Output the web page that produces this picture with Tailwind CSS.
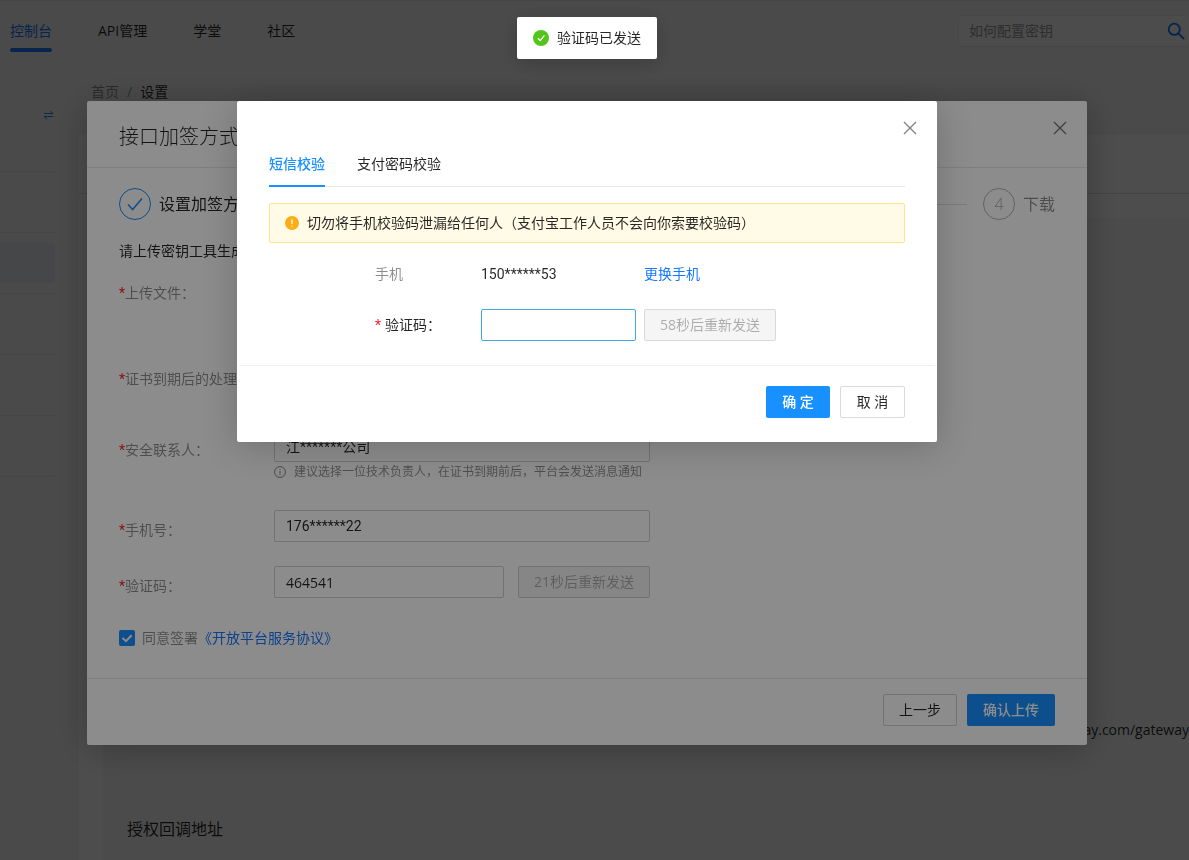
<!DOCTYPE html>
<html lang="zh-CN">
<head>
<meta charset="utf-8">
<meta name="viewport" content="width=device-width, initial-scale=1">
<title>设置</title>
<script src="https://cdn.jsdelivr.net/npm/@tailwindcss/browser@4"></script>
</head>
<body class="h-screen overflow-hidden bg-[#f5f5f5] font-['Open_Sans','Noto_Sans_CJK_SC',sans-serif] text-sm leading-[22px] font-normal text-black/85">

<!-- Page -->
<div class="flex h-screen flex-col overflow-hidden border-t border-[#e0e0e0]">
  <header class="flex shrink-0 items-start justify-between pl-[10px]">
    <nav class="flex gap-[46px] pt-[19px]">
      <a href="#" class="flex flex-col gap-[6px] text-[#1677ff]">控制台<span class="h-1 rounded-sm bg-[#1677ff]"></span></a>
      <a href="#">API管理</a>
      <a href="#">学堂</a>
      <a href="#">社区</a>
    </nav>
    <form class="mt-[14px] flex h-8 w-[231px] items-center justify-between rounded border border-r-0 border-[#eaeaea] bg-[#fafafa] pr-1 pl-[10px]">
      <input type="text" aria-label="搜索" placeholder="如何配置密钥" class="w-40 bg-transparent outline-none placeholder:text-[#999]">
      <button type="button" aria-label="搜索"><svg class="size-[18px]" viewBox="0 0 18 18" fill="none" stroke="#1677ff" stroke-width="1.8"><circle cx="7.3" cy="7.3" r="5.6"/><path d="M11.3 11.3L17 17"/></svg></button>
    </form>
  </header>
  <div class="mt-7 flex flex-1 items-stretch">
    <aside class="flex w-[55px] shrink-0 flex-col items-stretch">
      <button type="button" aria-label="切换" class="mt-[30px] mr-px self-end"><svg class="h-[10px] w-[11px]" viewBox="0 0 11 10" fill="none" stroke="#1890ff" stroke-width="1"><path d="M1 3.5H10L7.2 1M10 6.5H1L3.8 9"/></svg></button>
      <div class="mt-[51px] h-[61px] border-t border-[#e8e8e8]"></div>
      <div class="h-[61px] border-t border-[#e8e8e8] pt-[10px]"><div class="h-10 rounded-r bg-[#e6ecf2]"></div></div>
      <div class="h-[61px] border-t border-[#e8e8e8]"></div>
      <div class="h-[61px] border-t border-[#e8e8e8]"></div>
      <div class="h-[61px] border-t border-[#e8e8e8]"></div>
      <div class="border-t border-[#e8e8e8]"></div>
    </aside>
    <main class="ml-6 flex flex-1 flex-col">
      <nav class="flex gap-2 pt-px pl-3"><a href="#" class="text-black/45">首页</a><span class="text-black/45">/</span><span>设置</span></nav>
      <section class="mt-8 flex flex-1 flex-col bg-white">
        <div class="h-[58px]"></div>
        <div class="flex-1 border-t border-[#e0e0e0] pt-6 pl-6">
          <div class="h-full bg-[#f7f7f7] pt-[501px] pl-6">
            <p class="flex justify-end whitespace-nowrap">openapi.alipay.com/gateway</p>
            <h2 class="mt-[76px] text-base leading-6">授权回调地址</h2>
          </div>
        </div>
      </section>
    </main>
  </div>
</div>

<!-- Signing method dialog -->
<div class="fixed inset-0 flex items-start justify-center bg-black/45 pt-[101px] pr-[15px]">
  <div role="dialog" aria-label="接口加签方式" class="w-full max-w-[1000px] rounded-xs bg-white shadow-[0_4px_36px_rgba(0,0,0,0.25)]">
    <div class="flex items-center justify-between border-b border-[#e8e8e8] pr-5 pl-8">
      <h1 class="pt-[22px] pb-4 text-xl leading-7 font-light">接口加签方式</h1>
      <button type="button" aria-label="关闭" class="mb-3"><svg class="size-[14px]" viewBox="0 0 14 14" fill="none" stroke="#000" stroke-opacity=".55" stroke-width="1.3"><path d="M1 1L13 13M13 1L1 13"/></svg></button>
    </div>
    <div class="px-8 pt-5 pb-6">
      <ol class="flex items-center text-base leading-8">
        <li class="flex flex-1 items-center gap-2">
          <span class="flex size-8 items-center justify-center rounded-full border border-[#1890ff]"><svg class="size-4" viewBox="0 0 16 16" fill="none" stroke="#1890ff" stroke-width="1.5"><path d="M1 8.5L5.6 13.5L15 2.5"/></svg></span>
          <span>设置加签方式</span>
          <span class="mr-4 ml-2 h-px flex-1 bg-[#e0e0e0]"></span>
        </li>
        <li class="flex items-center gap-2 text-black/45">
          <span class="flex size-8 items-center justify-center rounded-full border border-black/30 font-light text-black/35">4</span>
          <span>下载</span>
        </li>
      </ol>
      <p class="mt-5">请上传密钥工具生成的文件</p>
      <form class="mt-[11px] flex flex-col gap-6 text-black/45">
        <div class="h-[62px] leading-10"><span class="font-['Roboto'] text-[#f5222d]">*</span>上传文件：</div>
        <div class="h-[47px] leading-10"><span class="font-['Roboto'] text-[#f5222d]">*</span>证书到期后的处理方式：</div>
        <div class="flex h-14">
          <label for="contact" class="h-8 w-[155px] leading-10"><span class="font-['Roboto'] text-[#f5222d]">*</span>安全联系人：</label>
          <div class="w-[376px]">
            <input id="contact" type="text" value="江*******公司" class="block h-8 w-full rounded-xs border border-[#d0d0d0] px-[11px] font-['Roboto','Noto_Sans_CJK_SC',sans-serif] text-black/85">
            <p class="flex items-center gap-2 text-xs leading-5"><svg class="size-3" viewBox="0 0 12 12" fill="none" stroke="currentColor"><circle cx="6" cy="6" r="5.4"/><path d="M6 5V9M6 3V4.2"/></svg>建议选择一位技术负责人，在证书到期前后，平台会发送消息通知</p>
          </div>
        </div>
        <div class="flex h-8">
          <label for="phone" class="w-[155px] leading-10"><span class="font-['Roboto'] text-[#f5222d]">*</span>手机号：</label>
          <input id="phone" type="text" value="176******22" class="h-8 w-[376px] rounded-xs border border-[#d0d0d0] px-[11px] font-['Roboto',sans-serif] text-black/85">
        </div>
        <div class="flex h-8">
          <label for="code1" class="w-[155px] leading-10"><span class="font-['Roboto'] text-[#f5222d]">*</span>验证码：</label>
          <input id="code1" type="text" value="464541" class="h-8 w-[230px] rounded-xs border border-[#d0d0d0] px-[11px] text-black/85">
          <button type="button" disabled class="ml-[14px] h-8 w-[132px] rounded-xs border border-[#d0d0d0] bg-[#f5f5f5] text-black/30">21秒后重新发送</button>
        </div>
        <div class="flex h-8 items-center">
          <label class="flex items-center gap-[7px]">
            <span class="relative flex size-4">
              <input type="checkbox" checked class="size-4 appearance-none rounded-xs bg-[#1890ff]">
              <svg class="pointer-events-none absolute inset-0 size-4" viewBox="0 0 16 16" fill="none" stroke="#fff" stroke-width="2"><path d="M3.5 8L7 11.2L12.6 5.2"/></svg>
            </span>
            同意签署
          </label>
          <a href="#" class="text-[#1677ff]">《开放平台服务协议》</a>
        </div>
      </form>
    </div>
    <div class="flex justify-end gap-[10px] border-t border-[#e8e8e8] px-8 pt-[15px] pb-[19px]">
      <button type="button" class="h-8 rounded-xs border border-[#d0d0d0] px-[15px]">上一步</button>
      <button type="button" class="h-8 rounded-xs bg-[#1890ff] px-4 font-medium text-white">确认上传</button>
    </div>
  </div>
</div>

<!-- Verification dialog -->
<div class="fixed inset-0 flex items-start justify-center bg-black/45 pt-[101px] pr-[15px]">
  <div role="dialog" aria-label="短信校验" class="w-full max-w-[700px] rounded-xs bg-white shadow-[0_4px_36px_rgba(0,0,0,0.2)]">
    <div class="flex justify-end pt-5 pr-5"><button type="button" aria-label="关闭"><svg class="size-[14px]" viewBox="0 0 14 14" fill="none" stroke="#000" stroke-opacity=".5" stroke-width="1.3"><path d="M1 1L13 13M13 1L1 13"/></svg></button></div>
    <div class="px-8">
      <div role="tablist" class="mt-2 flex h-11 items-stretch gap-8 border-b border-[#e8e8e8]">
        <button type="button" role="tab" aria-selected="true" class="-mb-px border-b-2 border-[#1890ff] font-medium text-[#1890ff]">短信校验</button>
        <button type="button" role="tab" aria-selected="false" class="-mb-px border-b-2 border-transparent">支付密码校验</button>
      </div>
      <div role="alert" class="mt-4 flex h-10 items-center gap-2 rounded-xs border border-[#ffe58f] bg-[#fffbe6] px-[15px]">
        <svg class="size-[14px]" viewBox="0 0 14 14"><circle cx="7" cy="7" r="7" fill="#faad14"/><path d="M7 3.2V8M7 9.4V10.8" stroke="#fffbe6" stroke-width="1.3"/></svg>
        切勿将手机校验码泄漏给任何人（支付宝工作人员不会向你索要校验码）
      </div>
      <div class="mt-5 flex leading-[22px]">
        <span class="ml-[106px] w-[106px] text-black/45">手机</span>
        <span class="w-[163px] font-['Roboto',sans-serif]">150******53</span>
        <a href="#" class="text-[#1677ff]">更换手机</a>
      </div>
      <form class="mt-6 flex items-center">
        <label for="code2" class="ml-[106px] w-[106px]"><span class="mr-1 font-['Roboto'] text-[#f5222d]">*</span>验证码：</label>
        <input id="code2" type="text" class="h-8 w-[155px] rounded-xs border border-[#40a9e0] px-3 outline-none">
        <button type="button" disabled class="ml-2 h-8 w-[132px] rounded-xs border border-[#d9d9d9] bg-[#f5f5f5] text-black/30">58秒后重新发送</button>
      </form>
    </div>
    <div class="mx-0.5 mt-6 flex justify-end gap-[10px] border-t border-[#f0f0f0] px-[30px] pt-5 pb-6">
      <button type="button" class="h-8 w-16 rounded-xs bg-[#1890ff] font-medium text-white">确 定</button>
      <button type="button" class="h-8 w-[65px] rounded-xs border border-[#d9d9d9]">取 消</button>
    </div>
  </div>
</div>

<!-- Toast -->
<div class="pointer-events-none fixed inset-x-0 top-[17px] flex justify-center pr-[15px]">
  <div role="status" class="flex items-center gap-2 rounded-xs bg-white px-4 py-[10px] shadow-[0_4px_20px_rgba(0,0,0,0.2)]">
    <svg class="size-4" viewBox="0 0 16 16"><circle cx="8" cy="8" r="8" fill="#52c41a"/><path d="M4.8 8.2L7.2 10.6L11.4 5.4" fill="none" stroke="#fff" stroke-width="1.3"/></svg>
    验证码已发送
  </div>
</div>
</body>
</html>
